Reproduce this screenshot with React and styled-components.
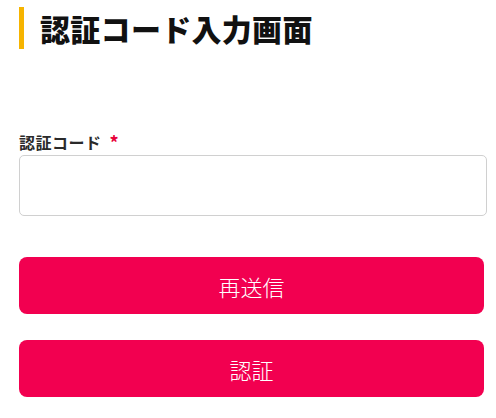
import React from 'react';
import styled, { createGlobalStyle } from 'styled-components';

const Global = createGlobalStyle`
  body {
    margin: 0;
    background: #fff;
    font-family: "Noto Sans CJK JP", "Noto Sans", sans-serif;
    color: #222;
  }
`;

const Page = styled.div`
  width: 496px;
  padding: 7px 0 0 19px;
  box-sizing: border-box;
`;

const Heading = styled.h1`
  margin: 0;
  height: 42px;
  border-left: 5px solid #f6b400;
  padding-left: 16px;
  font-size: 30px;
  line-height: 42px;
  letter-spacing: 0.3px;
  font-weight: 900;
  color: #111;
`;

const Form = styled.div`
  display: flex;
  flex-direction: column;
  width: 468px;
  margin-top: 83px;
`;

const Label = styled.label`
  display: flex;
  align-items: center;
  gap: 8px;
  font-size: 16px;
  line-height: 20px;
  letter-spacing: 0.5px;
  font-weight: 700;
  color: #2a2a2a;
  margin-bottom: 3px;
`;

const Required = styled.span`
  color: #e8003a;
  font-size: 18px;
`;

const Input = styled.input`
  height: 61px;
  box-sizing: border-box;
  border: 1px solid #d0d0d0;
  border-radius: 5px;
  font-size: 16px;
  padding: 0 12px;
  outline: none;
`;

const Actions = styled.div`
  display: flex;
  flex-direction: column;
  gap: 26px;
  margin-top: 41px;
  width: 465px;
`;

const Button = styled.button`
  height: 57px;
  border: none;
  border-radius: 8px;
  background: #f20050;
  color: #fff;
  font-family: inherit;
  font-size: 22px;
  font-weight: 300;
  cursor: pointer;
`;

export default function App() {
  return (
    <Page>
      <Global />
      <Heading>認証コード入力画面</Heading>
      <Form>
        <Label htmlFor="code">
          認証コード<Required>*</Required>
        </Label>
        <Input id="code" type="text" />
        <Actions>
          <Button>再送信</Button>
          <Button>認証</Button>
        </Actions>
      </Form>
    </Page>
  );
}
